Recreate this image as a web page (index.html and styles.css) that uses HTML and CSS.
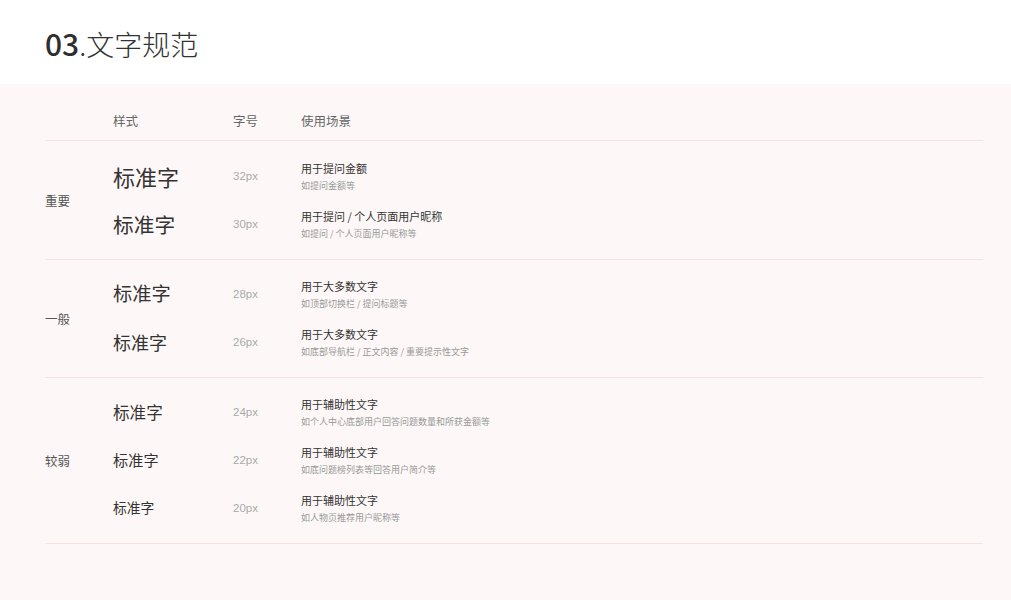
FILE: index.html
```html
<!DOCTYPE html>
<html lang="zh-CN">
<head>
<meta charset="utf-8">
<title>03.文字规范</title>
<link rel="stylesheet" href="styles.css">
</head>
<body>
<header class="top">
  <h1 class="title"><span class="num">03</span>.文字规范</h1>
</header>
<main class="panel">
  <div class="table">
    <div class="thead">
      <div class="c-label"></div>
      <div class="c-style">样式</div>
      <div class="c-size h-size">字号</div>
      <div class="c-use">使用场景</div>
    </div>

    <section class="group first">
      <div class="c-label glabel">重要</div>
      <div class="rows">
        <div class="row">
          <div class="c-style sample s32">标准字</div>
          <div class="c-size">32px</div>
          <div class="c-use"><div class="main">用于提问金额</div><div class="sub">如提问金额等</div></div>
        </div>
        <div class="row">
          <div class="c-style sample s30">标准字</div>
          <div class="c-size">30px</div>
          <div class="c-use"><div class="main">用于提问 / 个人页面用户昵称</div><div class="sub">如提问 / 个人页面用户昵称等</div></div>
        </div>
      </div>
    </section>

    <section class="group">
      <div class="c-label glabel">一般</div>
      <div class="rows">
        <div class="row">
          <div class="c-style sample s28">标准字</div>
          <div class="c-size">28px</div>
          <div class="c-use"><div class="main">用于大多数文字</div><div class="sub">如顶部切换栏 / 提问标题等</div></div>
        </div>
        <div class="row">
          <div class="c-style sample s26">标准字</div>
          <div class="c-size">26px</div>
          <div class="c-use"><div class="main">用于大多数文字</div><div class="sub">如底部导航栏 / 正文内容 / 重要提示性文字</div></div>
        </div>
      </div>
    </section>

    <section class="group">
      <div class="c-label glabel">较弱</div>
      <div class="rows">
        <div class="row">
          <div class="c-style sample s24">标准字</div>
          <div class="c-size">24px</div>
          <div class="c-use"><div class="main">用于辅助性文字</div><div class="sub">如个人中心底部用户回答问题数量和所获金额等</div></div>
        </div>
        <div class="row">
          <div class="c-style sample s22">标准字</div>
          <div class="c-size">22px</div>
          <div class="c-use"><div class="main">用于辅助性文字</div><div class="sub">如底问题榜列表等回答用户简介等</div></div>
        </div>
        <div class="row">
          <div class="c-style sample s20">标准字</div>
          <div class="c-size">20px</div>
          <div class="c-use"><div class="main">用于辅助性文字</div><div class="sub">如人物页推荐用户昵称等</div></div>
        </div>
      </div>
    </section>
  </div>
</main>
</body>
</html>
```

FILE: styles.css
```css
* { box-sizing: border-box; margin: 0; padding: 0; }

html, body {
  width: 1011px;
  height: 600px;
  overflow: hidden;
}

body {
  font-family: "Liberation Sans", "Noto Sans CJK SC", sans-serif;
  background: #fdf8f7;
  color: #333;
}

.top {
  height: 84px;
  background: #ffffff;
  padding: 25px 0 0 45px;
}

.title {
  font-size: 28px;
  font-weight: 300;
  color: #333;
  line-height: 36px;
  font-family: "Noto Sans CJK SC", sans-serif;
}

.title .num {
  font-family: "Noto Sans CJK SC", sans-serif;
  font-weight: 500;
  font-size: 30px;
  color: #2e2e2e;
}

.panel {
  padding: 0 28px 0 45px;
}

.table {
  width: 938px;
}

.thead {
  display: flex;
  align-items: center;
  height: 57px;
  padding-top: 16px;
  border-bottom: 1px solid #f6e4e0;
  font-family: "Noto Sans CJK SC", sans-serif;
  font-size: 12.5px;
  color: #666;
}

.c-label { width: 68px; flex: none; }
.c-style { width: 120px; flex: none; }
.c-size { width: 68px; flex: none; }
.c-use { flex: 1; }

.group {
  display: flex;
  align-items: center;
  padding: 10px 0 11px;
  border-bottom: 1px solid #f6e4e0;
}

.group.first {
  padding-top: 11px;
}

.glabel {
  font-family: "Noto Sans CJK SC", sans-serif;
  font-size: 12.5px;
  color: #555;
}

.rows { flex: 1; display: flex; flex-direction: column; }

.row {
  display: flex;
  align-items: center;
  height: 48px;
}

.sample {
  font-family: "Noto Sans CJK SC", sans-serif;
  color: #333;
  line-height: 1;
}
.s32 { font-size: 22px; }
.s30 { font-size: 20.7px; }
.s28 { font-size: 19.3px; }
.s26 { font-size: 18px; }
.s24 { font-size: 16.6px; }
.s22 { font-size: 15.2px; }
.s20 { font-size: 13.8px; }

.c-size {
  font-family: "Liberation Sans", sans-serif;
  font-size: 11.5px;
  color: #aaa;
}

.thead .h-size {
  font-family: "Noto Sans CJK SC", sans-serif;
  font-size: 12.5px;
  color: #666;
}

.main {
  font-family: "Noto Sans CJK SC", sans-serif;
  font-size: 11px;
  line-height: 14px;
  color: #333;
}

.sub {
  font-family: "Noto Sans CJK SC", sans-serif;
  font-size: 9px;
  line-height: 12px;
  margin-top: 5px;
  color: #999;
}
```
